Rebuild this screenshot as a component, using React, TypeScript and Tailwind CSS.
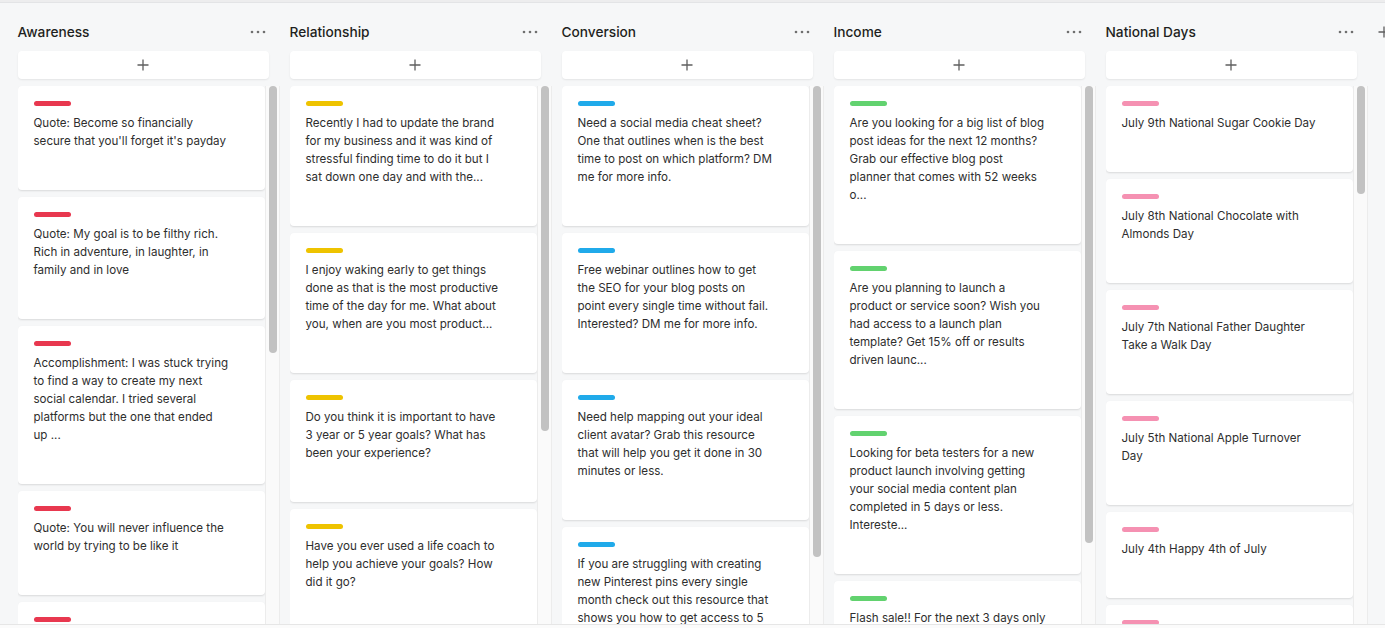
import React from "react";

type Column = {
  title: string;
  color: string;
  thumb: number;
  cards: string[][];
};

const columns: Column[] = [
  {
    title: "Awareness",
    color: "bg-[#e8384f]",
    thumb: 267,
    cards: [
      ["Quote: Become so financially", "secure that you'll forget it's payday"],
      ["Quote: My goal is to be filthy rich.", "Rich in adventure, in laughter, in", "family and in love"],
      [
        "Accomplishment: I was stuck trying",
        "to find a way to create my next",
        "social calendar. I tried several",
        "platforms but the one that ended",
        "up ...",
      ],
      ["Quote: You will never influence the", "world by trying to be like it"],
      [],
    ],
  },
  {
    title: "Relationship",
    color: "bg-[#eec300]",
    thumb: 345,
    cards: [
      [
        "Recently I had to update the brand",
        "for my business and it was kind of",
        "stressful finding time to do it but I",
        "sat down one day and with the...",
      ],
      [
        "I enjoy waking early to get things",
        "done as that is the most productive",
        "time of the day for me. What about",
        "you, when are you most product...",
      ],
      ["Do you think it is important to have", "3 year or 5 year goals? What has", "been your experience?"],
      ["Have you ever used a life coach to", "help you achieve your goals? How", "did it go?"],
    ],
  },
  {
    title: "Conversion",
    color: "bg-[#20aaea]",
    thumb: 471,
    cards: [
      [
        "Need a social media cheat sheet?",
        "One that outlines when is the best",
        "time to post on which platform? DM",
        "me for more info.",
      ],
      [
        "Free webinar outlines how to get",
        "the SEO for your blog posts on",
        "point every single time without fail.",
        "Interested? DM me for more info.",
      ],
      [
        "Need help mapping out your ideal",
        "client avatar? Grab this resource",
        "that will help you get it done in 30",
        "minutes or less.",
      ],
      [
        "If you are struggling with creating",
        "new Pinterest pins every single",
        "month check out this resource that",
        "shows you how to get access to 5",
      ],
    ],
  },
  {
    title: "Income",
    color: "bg-[#62d26f]",
    thumb: 457,
    cards: [
      [
        "Are you looking for a big list of blog",
        "post ideas for the next 12 months?",
        "Grab our effective blog post",
        "planner that comes with 52 weeks",
        "o...",
      ],
      [
        "Are you planning to launch a",
        "product or service soon? Wish you",
        "had access to a launch plan",
        "template? Get 15% off or results",
        "driven launc...",
      ],
      [
        "Looking for beta testers for a new",
        "product launch involving getting",
        "your social media content plan",
        "completed in 5 days or less.",
        "Intereste...",
      ],
      ["Flash sale!! For the next 3 days only"],
    ],
  },
  {
    title: "National Days",
    color: "bg-[#f591b2]",
    thumb: 108,
    cards: [
      ["July 9th National Sugar Cookie Day"],
      ["July 8th National Chocolate with", "Almonds Day"],
      ["July 7th National Father Daughter", "Take a Walk Day"],
      ["July 5th National Apple Turnover", "Day"],
      ["July 4th Happy 4th of July"],
      [],
    ],
  },
];

const Dots = () => (
  <svg width="16" height="4" viewBox="0 0 16 4" className="text-[#6f6f6f]">
    <circle cx="2" cy="2" r="1.3" fill="currentColor" />
    <circle cx="8" cy="2" r="1.3" fill="currentColor" />
    <circle cx="14" cy="2" r="1.3" fill="currentColor" />
  </svg>
);

const Plus = () => (
  <svg width="12" height="12" viewBox="0 0 12 12" className="text-[#5f5f5f]">
    <path d="M6 0.5V11.5M0.5 6H11.5" stroke="currentColor" strokeWidth="1.3" />
  </svg>
);

const Card = ({ lines, color }: { lines: string[]; color: string }) => (
  <div className="min-h-[86px] shrink-0 rounded-[4px] bg-white pt-[15px] pb-[40px] pl-4 shadow-[0_1px_2px_rgba(0,0,0,0.12)]">
    <div className={`h-[5px] w-[37px] rounded-full ${color}`} />
    <div className="mt-[8px] text-[11.6px] leading-[18px] text-[#2e2e2e]">
      {lines.map((line, i) => (
        <div key={i} className="whitespace-nowrap">
          {line}
        </div>
      ))}
    </div>
  </div>
);

const BoardColumn = ({ column }: { column: Column }) => (
  <div className="flex w-[262px] shrink-0 flex-col">
    <div className="flex h-[22px] items-center justify-between pr-[14px]">
      <p className="text-[13.7px] font-medium text-[#1e1f21]">{column.title}</p>
      <Dots />
    </div>
    <button className="mt-[8px] flex h-[28px] w-[251px] items-center justify-center rounded-[4px] bg-white shadow-[0_1px_2px_rgba(0,0,0,0.08)]">
      <Plus />
    </button>
    <div className="mt-[7px] flex min-h-0 flex-1">
      <div className="flex w-[247px] flex-col gap-[7px] overflow-hidden">
        {column.cards.map((lines, i) => (
          <Card key={i} lines={lines} color={column.color} />
        ))}
      </div>
      <div className="w-[15px] border-x border-[#ececec] bg-[#fafafa] pl-[3px]">
        <div className="w-[8px] rounded-full bg-[#c2c2c2]" style={{ height: column.thumb }} />
      </div>
    </div>
  </div>
);

export default function App() {
  return (
    <div
      className="flex h-[628px] w-full flex-col overflow-hidden bg-[#f6f7f8]"
      style={{ fontFamily: "Inter, 'Noto Sans', sans-serif" }}
    >
      <div className="h-[3px] shrink-0 border-b border-[#e3e4e6] bg-[#ededee]" />
      <div className="flex min-h-0 flex-1 gap-[10px] overflow-hidden pt-[18px] pl-[17.5px]">
        {columns.map((column) => (
          <BoardColumn key={column.title} column={column} />
        ))}
        <div className="flex h-[22px] shrink-0 items-center">
          <Plus />
        </div>
      </div>
      <div className="h-[4px] shrink-0 border-t border-[#e6e6e6] bg-[#fbfbfb]" />
    </div>
  );
}
